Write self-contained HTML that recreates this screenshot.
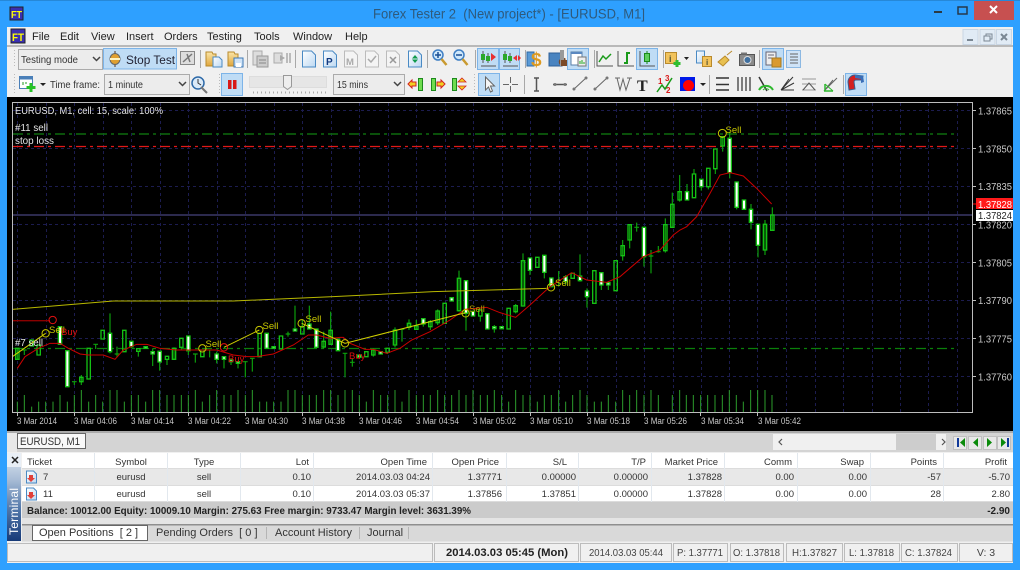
<!DOCTYPE html>
<html><head><meta charset="utf-8"><title>Forex Tester 2</title>
<style>
html,body{margin:0;padding:0;background:#2ea0ff;width:1020px;height:570px;overflow:hidden}
svg{display:block}
text{font-family:"Liberation Sans",sans-serif;white-space:pre}
.m{font-size:11px;fill:#222}
.p{font-size:10px;fill:#c8c8c8}
.t{font-size:9.500px;fill:#c8c8c8}
.w{font-size:10px;fill:#e4e4e4}
.h{font-size:9.500px;fill:#333}
.r{font-size:9.500px;fill:#333}
.e{text-anchor:end}
.c{text-anchor:middle}
.s{font-size:10.500px;fill:#333}
.b{fill:#bfdcf5;stroke:#7db4e8}
.sep{stroke:#a8a8a8;stroke-width:1}
.g{fill:none;stroke:#666}
</style></head><body>
<svg width="1020" height="570" viewBox="0 0 1020 570" xmlns="http://www.w3.org/2000/svg">
<defs>
<linearGradient id="term" x1="0" y1="0" x2="0" y2="1"><stop offset="0" stop-color="#dfe8f2"/><stop offset=".3" stop-color="#a9bdd6"/><stop offset=".65" stop-color="#4f75a8"/><stop offset="1" stop-color="#173a78"/></linearGradient>
<linearGradient id="docb" x1="0" y1="0" x2="1" y2="1"><stop offset="0" stop-color="#fff"/><stop offset="1" stop-color="#bcd8f2"/></linearGradient>
<linearGradient id="fold" x1="0" y1="0" x2="0" y2="1"><stop offset="0" stop-color="#fbe6a8"/><stop offset="1" stop-color="#e0a63c"/></linearGradient>
</defs>
<!-- frame -->
<rect width="1020" height="570" fill="#2ea0ff"/>
<rect x="0" y="0" width="1020" height="1" fill="#2688d8"/>
<rect x="10" y="7" width="13" height="13" fill="#3a2fb0" stroke="#222"/>
<text x="11" y="18" textLength="11" lengthAdjust="spacingAndGlyphs" style="font-size:10px;font-weight:bold;fill:#ff0">FT</text>
<text x="373" y="18.500" textLength="272" lengthAdjust="spacingAndGlyphs" style="font-size:14px;fill:#2f5a7c">Forex Tester 2  (New project*) - [EURUSD, M1]</text>
<rect x="934" y="11" width="8" height="2" fill="#2b3a44"/>
<rect x="958" y="7" width="9" height="7" fill="none" stroke="#26394a" stroke-width="1.500"/>
<rect x="974" y="1" width="40" height="19" fill="#c75050"/>
<path d="M990 6l7 7M997 6l-7 7" stroke="#fff" stroke-width="2"/>
<!-- client -->
<rect x="7" y="27" width="1006" height="70" fill="#f0f0f0"/>
<rect x="7" y="45" width="1006" height="2" fill="#b9b9b9"/>
<rect x="11" y="29" width="14" height="14" fill="#3a2fb0" stroke="#222"/>
<text x="12" y="41" textLength="12" lengthAdjust="spacingAndGlyphs" style="font-size:11px;font-weight:bold;fill:#ff0">FT</text>
<text x="32" y="40" class="m">File</text><text x="60" y="40" class="m">Edit</text><text x="91" y="40" class="m">View</text><text x="126" y="40" class="m">Insert</text><text x="164" y="40" class="m">Orders</text><text x="207" y="40" class="m">Testing</text><text x="254" y="40" class="m">Tools</text><text x="293" y="40" class="m">Window</text><text x="345" y="40" class="m">Help</text>
<g fill="#e1ebf5" stroke="#c9d6e4"><rect x="963" y="29.500" width="15" height="15"/><rect x="980" y="29.500" width="15" height="15"/><rect x="996.500" y="29.500" width="15" height="15"/></g>
<path d="M967 40h6" stroke="#7b8793" stroke-width="2"/>
<path d="M984 36h6v5h-6zM986 36v-2h6v5h-2" fill="none" stroke="#7b8793"/>
<path d="M1001 34l6 6M1007 34l-6 6" stroke="#7b8793" stroke-width="2"/>
<!-- toolbar 1 -->
<path d="M14.500 50v18M14.500 74v20M219.500 74v20M474.500 74v20" stroke="#bbb" stroke-dasharray="1 2"/>
<rect x="18.500" y="49.500" width="84" height="20" fill="#ececec" stroke="#ababab"/>
<text x="21" y="63" class="s" textLength="57" lengthAdjust="spacingAndGlyphs">Testing mode</text>
<path d="M93 57l3.500 3.500L100 57" fill="none" stroke="#444" stroke-width="1.500"/>
<rect x="103.500" y="48.500" width="73" height="20.500" class="b"/>
<path d="M115 51v3M115 64v3" stroke="#888" stroke-width="2"/>
<ellipse cx="115" cy="59" rx="5" ry="5.500" fill="#e0a030" stroke="#666"/><rect x="110" y="58" width="10" height="2" fill="#fff3c0"/>
<text x="126" y="64" style="font-size:12px;fill:#223" textLength="49" lengthAdjust="spacingAndGlyphs">Stop Test</text>
<rect x="180.500" y="51.500" width="14" height="13" fill="#ddd" stroke="#888"/><path d="M183 62l9-8M187 54l3 8" stroke="#777" stroke-width="1.500"/>
<path class="sep" d="M200.500 50v18M247.500 50v18M295.500 50v18M427.500 50v18M475.500 50v18M525.500 50v18M594.500 50v18M663.500 50v18M759.500 50v18"/>
<!-- folders -->
<path d="M206 52h6l1 2h3v12h-10z" fill="url(#fold)" stroke="#b98a2c"/><path d="M213 57h6l3 3v7h-9z" fill="url(#docb)" stroke="#4a8ac4"/>
<path d="M228 52h6l1 2h3v12h-10z" fill="url(#fold)" stroke="#b98a2c"/><rect x="234" y="58" width="9" height="9" fill="#cfe3f7" stroke="#3e78b4"/><rect x="236" y="63" width="5" height="4" fill="#fff"/>
<!-- grey -->
<path d="M253 51h9v14h-9z" fill="#ddd" stroke="#aaa"/><rect x="257" y="56" width="11" height="11" fill="#ccc" stroke="#999"/><path d="M259 60h7M259 63h7" stroke="#888"/>
<rect x="274" y="53" width="8" height="10" fill="#ddd" stroke="#aaa"/><path d="M280 55l5 3-5 3z" fill="#aaa"/><path d="M287 53v10M290 53v10" stroke="#bbb" stroke-width="2"/>
<!-- docs -->
<path d="M302.500 51h9l4 4v12h-13z" fill="url(#docb)" stroke="#4a8ac4"/>
<path d="M323.500 51h9l4 4v12h-13z" fill="url(#docb)" stroke="#4a8ac4"/><text x="326" y="65" style="font-size:10px;font-weight:bold;fill:#123a80">P</text>
<path d="M344.500 51h9l4 4v12h-13z" fill="#f4f4f4" stroke="#bbb"/><text x="346" y="65" style="font-size:9.500px;font-weight:bold;fill:#aaa">M</text>
<path d="M365.500 51h9l4 4v12h-13z" fill="#f4f4f4" stroke="#bbb"/><path d="M368 59l3 3 5-6" fill="none" stroke="#aaa" stroke-width="1.500"/>
<path d="M386.500 51h9l4 4v12h-13z" fill="#f4f4f4" stroke="#bbb"/><path d="M390 57l6 6M396 57l-6 6" stroke="#999" stroke-width="1.500"/>
<path d="M408.500 51h9l4 4v12h-13z" fill="url(#docb)" stroke="#4a8ac4"/><path d="M415 55l3 3.500h-6zM415 63l3-3.500h-6z" fill="#109a4c"/>
<!-- zoom -->
<circle cx="438" cy="55" r="5" fill="#cfe8fb" stroke="#3f7fc4" stroke-width="1.500"/><path d="M441.500 59l5 6" stroke="#c99a30" stroke-width="2.500"/><path d="M435 55h6M438 52v6" stroke="#1a4f95" stroke-width="1.500"/>
<circle cx="459" cy="55" r="5" fill="#cfe8fb" stroke="#3f7fc4" stroke-width="1.500"/><path d="M462.500 59l5 6" stroke="#c99a30" stroke-width="2.500"/><path d="M456 55h6" stroke="#1a4f95" stroke-width="1.500"/>
<!-- active -->
<rect x="477.500" y="48.500" width="21" height="21" class="b"/><rect x="499.500" y="48.500" width="20" height="21" class="b"/>
<path d="M483 51v12M488 53v10M481 66h15M505 51v12M510 53v10M503 66h15" stroke="#555"/>
<rect x="481" y="54" width="4" height="6" fill="#2aa82a"/><rect x="486" y="56" width="4" height="5" fill="#2aa82a"/><path d="M491 53l5 4-5 4z" fill="#e83030"/>
<rect x="503" y="54" width="4" height="6" fill="#2aa82a"/><rect x="508" y="56" width="4" height="5" fill="#2aa82a"/><path d="M513 58l4-3v6zM518 55v6l3-3z" fill="#e83030"/>
<!-- dollar -->
<rect x="527" y="52" width="7" height="14" fill="#5a9ad6" stroke="#2f6aa6"/><text x="531" y="66" style="font-size:19px;font-weight:bold;fill:#dd9a20">$</text>
<rect x="549" y="53" width="13" height="13" fill="#4a84c0" stroke="#2f5f98"/><path d="M560 65a4 4 0 0 1 6-6" fill="#7a4a28"/><rect x="560" y="50" width="4" height="16" fill="#999"/><rect x="561" y="60" width="6" height="6" fill="#7a4a28"/>
<rect x="567.500" y="48.500" width="21" height="21" class="b"/><rect x="571" y="52" width="11" height="13" fill="#fff" stroke="#5a7fa8"/><rect x="578" y="57" width="8" height="9" fill="#eee" stroke="#777"/><path d="M580 64v-3M582 64v-4M584 64v-2" stroke="#2a2"/><rect x="571" y="52" width="11" height="2" fill="#5a88c0"/>
<!-- chart icons -->
<path d="M597 51v15h16" fill="none" stroke="#555"/><path d="M599 62l4-6 3 3 5-5" fill="none" stroke="#1a9a1a" stroke-width="1.500"/>
<path d="M618 51v15h16" fill="none" stroke="#555"/><path d="M624 63h3V53h3" fill="none" stroke="#1a9a1a" stroke-width="2"/>
<rect x="636.500" y="48.500" width="21" height="21" class="b"/><path d="M640 51v15h15" fill="none" stroke="#555"/><path d="M647 51v13" stroke="#1a8a1a"/><rect x="644.500" y="53.500" width="5" height="8" fill="#5ed05e" stroke="#1a8a1a"/>
<!-- info -->
<rect x="665.500" y="52.500" width="11" height="11" fill="#f2c35c" stroke="#b98a2c"/><text x="669" y="62" style="font-size:9px;font-weight:bold;fill:#553">i</text><path d="M677 60v7M673.500 63.500h7" stroke="#2fbd2f" stroke-width="3"/>
<path d="M684 57h5l-2.500 3z" fill="#222"/>
<path d="M696.500 51h8v12h-8z" fill="url(#docb)" stroke="#4a8ac4"/><rect x="702.500" y="56.500" width="9" height="10" fill="#f2c35c" stroke="#b98a2c"/><text x="706" y="65" style="font-size:8px;font-weight:bold;fill:#553">i</text>
<path d="M718 62l7-6 4 4-6 6zM727 55l5-4" fill="#e8c050" stroke="#b98a2c"/>
<rect x="739.500" y="54.500" width="15" height="11" fill="#8a8a8a" stroke="#555"/><circle cx="747.500" cy="60" r="3.500" fill="#3f6f9f" stroke="#ddd"/><rect x="741" y="52.500" width="6" height="2" fill="#777"/>
<rect x="762.500" y="48.500" width="21" height="21" class="b"/><rect x="766" y="52" width="10" height="13" fill="#eee" stroke="#667"/><path d="M768 55h6M768 58h6" stroke="#667"/><rect x="772" y="58" width="9" height="9" fill="#d99a30" stroke="#a67a20"/>
<rect x="786.500" y="50.500" width="14" height="17" fill="#cfe3f7" stroke="#8cb8e2"/><path d="M790 54h8M790 57h8M790 60h8M790 63h8" stroke="#666"/>
<!-- toolbar 2 -->
<rect x="19.500" y="76.500" width="13" height="12" fill="#fff" stroke="#4a7fb8"/><rect x="19.500" y="76.500" width="13" height="3" fill="#4a7fb8"/><path d="M23 85v-3M26 84v-2" stroke="#292"/><path d="M31 83v9M26.500 87.500h9" stroke="#27c227" stroke-width="3"/>
<path d="M40 83h6l-3 3z" fill="#222"/>
<text x="50" y="88" class="s" textLength="50" lengthAdjust="spacingAndGlyphs">Time frame:</text>
<rect x="104.500" y="74.500" width="85" height="20" fill="#ececec" stroke="#ababab"/>
<text x="108" y="88" class="s" textLength="35" lengthAdjust="spacingAndGlyphs">1 minute</text>
<path d="M179 82l3.500 3.500L186 82" fill="none" stroke="#444" stroke-width="1.500"/>
<circle cx="198" cy="83" r="6" fill="#dbeaf8" stroke="#2e6aa8" stroke-width="1.500"/><path d="M198 79v4l3 2" fill="none" stroke="#333"/><path d="M201 87l6 6" stroke="#777" stroke-width="2"/>
<rect x="221.500" y="73.500" width="21" height="22" class="b"/><rect x="228" y="80" width="3.500" height="9" fill="#d81818"/><rect x="233" y="80" width="3.500" height="9" fill="#d81818"/>
<rect x="249.500" y="76.500" width="77" height="11" fill="#e6e6e6" stroke="#ddd"/>
<path d="M283.500 75.500h8v11l-4 3-4-3z" fill="#eee" stroke="#999"/>
<path d="M253 92.500h74" stroke="#aaa" stroke-dasharray="1 3" stroke-width="2"/>
<rect x="333.500" y="74.500" width="71" height="20" fill="#ececec" stroke="#ababab"/>
<text x="337" y="88" class="s" textLength="31" lengthAdjust="spacingAndGlyphs">15 mins</text>
<path d="M394 82l3.500 3.500L401 82" fill="none" stroke="#444" stroke-width="1.500"/>
<rect x="418.500" y="78.500" width="4" height="12" fill="#6fdc4f" stroke="#1d8a1d"/><path d="M408 84l4-4v2h4v4h-4v2z" fill="#f2d020" stroke="#d42020"/>
<rect x="431.500" y="78.500" width="4" height="12" fill="#6fdc4f" stroke="#1d8a1d"/><path d="M445 84l-4-4v2h-4v4h4v2z" fill="#f2d020" stroke="#d42020"/>
<rect x="452.500" y="78.500" width="4" height="12" fill="#6fdc4f" stroke="#1d8a1d"/><path d="M462 78l4 4h-8zM462 90l4-4h-8z" fill="#f2d020" stroke="#d42020" stroke-width=".8"/>
<rect x="478.500" y="73.500" width="21" height="22" class="b"/><path d="M485.500 77v13l3-3 2 5 2-1-2-5h4z" fill="#f4f4f4" stroke="#666"/>
<path d="M510.500 77v6M510.500 86v6M503 84.500h6M512 84.500h6" stroke="#666"/>
<path class="sep" d="M524.500 75v19M709.500 75v19M843.500 75v19"/>
<path d="M536.500 78v13M534 78h5M534 91h5" stroke="#555" stroke-width="1.500" fill="none"/>
<path d="M553 84.500h14" stroke="#555" stroke-width="1.500"/><path d="M573 90l14-13M594 90l14-13" stroke="#666"/>
<g fill="#777"><circle cx="574" cy="89" r="1.500"/><circle cx="586" cy="78" r="1.500"/><circle cx="595" cy="89" r="1.500"/><circle cx="607" cy="78" r="1.500"/><circle cx="555" cy="84.500" r="1.500"/><circle cx="565" cy="84.500" r="1.500"/></g>
<path d="M617 78l3 12 3-11 3 11 4-12M615 78h5M627 78h5" fill="none" stroke="#666"/>
<text x="637" y="91" style="font:bold 16px 'Liberation Serif',serif;fill:#222">T</text>
<text x="658" y="84" style="font-size:8px;font-weight:bold;fill:#d81818">1</text><text x="665" y="81" style="font-size:8px;font-weight:bold;fill:#d81818">3</text><text x="666" y="93" style="font-size:8px;font-weight:bold;fill:#d81818">2</text>
<path d="M657 92l5-7 3 4 7-11" fill="none" stroke="#1a9a1a" stroke-width="1.500"/>
<rect x="680" y="77" width="15" height="14" fill="#0018e8"/><circle cx="688.500" cy="85.500" r="5.500" fill="#f00"/>
<path d="M700 83h6l-3 3z" fill="#222"/>
<path d="M716 78h13M716 84.500h13M716 90h13" stroke="#333" stroke-width="1.500"/>
<path d="M738 77v14M742 77v14M746 77v14M750 77v14" stroke="#555" stroke-width="1.500"/>
<path d="M759 77l8 14" stroke="#333" stroke-width="1.500"/><path d="M759 90a8 8 0 0 1 14 0" fill="none" stroke="#2eb82e" stroke-width="2"/><path d="M763 90a4 4 0 0 1 6 0" fill="none" stroke="#2eb82e"/>
<path d="M781 90l12-13M781 90l13-7M781 90h13M781 90l8-11" stroke="#333"/>
<path d="M802 79h14M802 84l14 0M802 90h14" stroke="#999"/><path d="M803 90l6-7 6 7" fill="none" stroke="#555"/>
<path d="M824 91l13-13M824 91l9-11" stroke="#666"/><path d="M824 91h9M825 84v7" stroke="#2eb82e" stroke-width="1.500"/><path d="M825 84l8 7" stroke="#2eb82e"/>
<rect x="845.500" y="73.500" width="21" height="22" class="b"/>
<path d="M849 90l-1-8a7 7 0 0 1 7-7l8 1-1 4-6 0a2 2 0 0 0-2 2l1 7z" fill="#d42020" stroke="#3a5f90"/>
<path d="M855 75l8 1 1 6-3 1 0-4-6-1z" fill="#3a6fb8"/>
<!-- black chart area -->
<rect x="7" y="97" width="1006" height="334" fill="#000"/>
<!-- grid -->
<path d="M13 110.500H972M13 148.500H972M13 186.500H972M13 224.500H972M13 262.500H972M13 300.500H972M13 338.500H972M13 376.500H972" stroke="#1c1c50" stroke-dasharray="3 3"/>
<path d="M17.500 103V412M46.500 103V412M74.500 103V412M103.500 103V412M131.500 103V412M160.500 103V412M188.500 103V412M217.500 103V412M245.500 103V412M274.500 103V412M302.500 103V412M331.500 103V412M359.500 103V412M388.500 103V412M416.500 103V412M445.500 103V412M473.500 103V412M502.500 103V412M530.500 103V412M559.500 103V412M587.500 103V412M616.500 103V412M644.500 103V412M673.500 103V412M701.500 103V412M729.500 103V412M757.500 103V412M786.500 103V412M815.500 103V412M843.500 103V412M872.500 103V412M900.500 103V412M928.500 103V412M957.500 103V412" stroke="#1c1c50" stroke-dasharray="3 3"/>
<!-- levels -->
<path d="M13 215H973" stroke="#3a3868" stroke-width="1.500"/>
<path d="M13 134H958" stroke="#0d6a0d" stroke-width="1.500" stroke-dasharray="10 4 3 4"/>
<path d="M13 146.500H958" stroke="#e01818" stroke-width="1.200" stroke-dasharray="10 4 3 4"/>
<path d="M13 348.500H958" stroke="#0a800a" stroke-width="1.200" stroke-dasharray="10 4 3 4"/>
<!-- volumes -->
<g transform="translate(0,100) scale(.33333)" fill="none" stroke="#2c9c2c" stroke-width="3">
<path d="M52 905V938M73 885V938M95 920V938M116 905V938M137 905V938M159 905V938M180 885V938M202 905V938M223 885V938M244 870V938M266 905V938M287 885V938M308 905V938M330 870V938M351 870V938M373 905V938M394 885V938M415 885V938M437 905V938M458 870V938M479 870V938M501 885V938M522 885V938M544 885V938M565 885V938M586 870V938M607 905V938M629 885V938M650 870V938M672 885V938M693 885V938M714 870V938M736 885V938M757 870V938M779 905V938M800 905V938M821 905V938M843 905V938M864 870V938M885 870V938M907 885V938M928 885V938M949 885V938M971 870V938M992 870V938M1014 885V938"/>
<path d="M1035 870V938M1057 870V938M1078 885V938M1099 905V938M1120 870V938M1142 885V938M1163 885V938M1185 870V938M1206 905V938M1227 870V938M1249 885V938M1270 885V938M1291 885V938M1313 870V938M1334 885V938M1355 885V938M1377 870V938M1398 885V938M1419 870V938M1441 885V938M1462 885V938M1483 870V938M1505 885V938M1526 905V938M1547 870V938M1569 885V938M1590 885V938M1612 905V938M1633 885V938M1654 885V938M1676 870V938M1697 905V938M1718 885V938M1740 870V938M1761 885V938M1783 905V938M1804 905V938M1825 885V938M1847 905V938M1868 870V938M1889 885V938M1910 870V938M1932 885V938M1953 870V938M1975 885V938M2017 885V938M2039 870V938"/>
<path d="M2059 885V938M2080 885V938M2102 885V938M2123 885V938M2145 885V938M2167 885V938M2188 870V938M2209 885V938M2230 905V938M2252 870V938M2273 870V938M2295 870V938M2316 885V938"/>
</g>
<!-- candles zone 1 -->
<g transform="translate(0,100) scale(.33333)" stroke="#14c014" stroke-width="4" fill="none">
<path stroke="#0ca00c" stroke-width="3.500" d="M52 745V778M73 750V765M66 750H80M223 845V855M216 845H230M244 825V855M287 733V747M280 733H294M330 640V760M351 740V770M344 762H358M394 740V745M415 754V770M458 745V798M479 786V812M501 778V795M522 742V780M544 742V750M565 752V765M586 762V788M579 762H593M629 750V772M650 755V790M672 778V805M693 775V795M714 790V805M736 785V832M729 785H743M757 775V815M750 775H764M864 695V710M857 702H871M885 617V695M907 660V680M928 617V672M949 742V745M971 695V745M992 635V733"/>
<path d="M47 745h10V778h-10zM90 720h10V738h-10zM111 735h10V765h-10zM239 832h10V845h-10zM261 745h10V837h-10zM303 691h10V717h-10zM368 691h10V755h-10zM410 746h10V754h-10zM496 769h10V778h-10zM517 745h10V778h-10zM539 715h10V742h-10zM602 750h10V770h-10zM774 700h10V770h-10zM838 708h10V747h-10zM902 680h10V702h-10zM966 724h10V741h-10zM987 691h10V733h-10z"/>
<path fill="#fff" d="M175 680h10V733h-10zM197 752h10V860h-10zM325 700h10V755h-10zM389 724h10V740h-10zM432 740h10V745h-10zM453 755h10V762h-10zM474 754h10V786h-10zM560 708h10V752h-10zM645 762h10V778h-10zM667 770h10V778h-10zM688 780h10V785h-10zM709 785h10V790h-10zM795 700h10V745h-10zM816 740h10V745h-10zM880 687h10V693h-10zM923 672h10V687h-10zM944 687h10V742h-10zM1009 718h10V752h-10z"/>
</g>
<!-- candles zone 2 -->
<g transform="translate(340,100) scale(.33333)" stroke="#14c014" stroke-width="4" fill="none">
<path stroke="#0ca00c" stroke-width="3.500" d="M15 760V832M8 760H22M37 775V800M30 787H44M100 745V770M143 757V762M165 682V742M186 685V725M179 688H193M207 658V690M229 660V690M250 656V680M271 660V690M293 628V675M357 512V635M378 542V692M421 648V665M463 675V698M527 612V640M549 460V620M570 511V525M613 517V535M656 513V560M677 525V555M720 463V545M741 565V623M784 555V570M805 555V570M848 420V482M869 374V445M890 368V395M883 382H897M912 470V500M933 450V520M926 468H940M955 438V458M948 455H962M976 355V458M997 278V382M1019 225V305"/>
<path d="M74 755h10V770h-10zM95 750h10V765h-10zM138 745h10V757h-10zM160 690h10V735h-10zM202 670h10V682h-10zM224 678h10V688h-10zM266 665h10V680h-10zM288 633h10V668h-10zM309 610h10V670h-10zM352 535h10V632h-10zM416 630h10V648h-10zM501 625h10V687h-10zM522 617h10V635h-10zM544 482h10V618h-10zM587 472h10V502h-10zM693 520h10V535h-10zM758 512h10V610h-10zM822 482h10V572h-10zM843 437h10V467h-10zM864 374h10V420h-10zM971 374h10V452h-10zM992 313h10V382h-10zM1014 275h10V300h-10z"/>
<path fill="#fff" d="M53 765h10V772h-10zM117 755h10V762h-10zM245 656h10V672h-10zM330 593h10V603h-10zM373 542h10V640h-10zM394 634h10V648h-10zM437 641h10V687h-10zM458 680h10V686h-10zM480 680h10V686h-10zM565 474h10V511h-10zM608 466h10V517h-10zM629 534h10V560h-10zM672 530h10V545h-10zM715 528h10V542h-10zM736 573h10V590h-10zM779 518h10V555h-10zM800 548h10V555h-10zM907 382h10V470h-10z"/>
</g>
<!-- candles zone 3 -->
<g transform="translate(680,100) scale(.33333)" stroke="#14c014" stroke-width="4" fill="none">
<path stroke="#0ca00c" stroke-width="3.500" d="M21 252V275M42 207V222M64 260V272M85 260V268M106 206V222M128 108V155M149 95V235M170 322V328M213 312V388M234 436V472M255 360V465M277 322V391"/>
<path d="M37 222h10V293h-10zM80 205h10V260h-10zM101 147h10V206h-10zM123 110h10V138h-10zM250 373h10V450h-10zM272 345h10V391h-10z"/>
<path fill="#fff" d="M16 275h10V300h-10zM59 238h10V260h-10zM144 115h10V218h-10zM165 246h10V322h-10zM187 300h10V328h-10zM208 328h10V367h-10zM229 373h10V436h-10z"/>
</g>
<!-- indicators -->
<g transform="translate(0,100) scale(.33333)" fill="none" stroke-width="3">
<path stroke="#c00" d="M52 805L75 770L115 745L150 730L180 730L205 745L240 762L265 765L310 765L345 778L370 750L410 733L440 733L480 745L530 750L600 750L650 750L700 765L740 770L770 770L820 762L880 735L925 705L950 705L990 715L1020 712L1030 712L1050 730L1095 748L1120 748L1160 760L1200 745L1235 720L1290 695L1350 660L1395 628L1460 622L1500 638L1547 652L1590 615L1650 560L1715 518L1760 540L1820 547L1860 530L1930 470L1980 450L2020 405L2040 390L2060 380L2090 350L2130 280L2160 225L2190 218L2230 228L2270 265L2315 312"/>
<path stroke="#b8b800" d="M37 628L340 603L700 603L1000 590L1300 575L1640 565"/>
<path stroke="#d0d000" d="M37 770L137 700M672 742L778 690M905 670L1035 730L1397 638"/>
<path stroke="#8a0000" stroke-width="4" d="M37 662H150"/>
<g stroke="#c8c800"><circle cx="137" cy="700" r="11"/><circle cx="607" cy="745" r="11"/><circle cx="778" cy="690" r="11"/><circle cx="905" cy="670" r="11"/><circle cx="1035" cy="730" r="11"/><circle cx="1397" cy="640" r="11"/><circle cx="1653" cy="562" r="11"/><circle cx="2167" cy="100" r="12"/></g>
<g stroke="#e01010"><circle cx="158" cy="660" r="11"/><circle cx="672" cy="742" r="11"/></g>
</g>
<!-- chart frame -->
<rect x="12.500" y="102.500" width="960" height="310" fill="none" stroke="#bdbdbd"/>
<path d="M17.500 413v3M74.500 413v3M131.500 413v3M188.500 413v3M245.500 413v3M302.500 413v3M359.500 413v3M416.500 413v3M473.500 413v3M530.500 413v3M587.500 413v3M644.500 413v3M700.500 413v3M757.500 413v3M973 110.500h3M973 148.500h3M973 186.500h3M973 224.500h3M973 262.500h3M973 300.500h3M973 338.500h3M973 376.500h3" stroke="#bdbdbd"/>
<!-- chart text -->
<text x="15" y="114" class="w" textLength="148" lengthAdjust="spacingAndGlyphs">EURUSD, M1, cell: 15, scale: 100%</text>
<text x="15" y="131" class="w" textLength="33" lengthAdjust="spacingAndGlyphs">#11 sell</text><text x="15" y="144" class="w" textLength="39" lengthAdjust="spacingAndGlyphs">stop loss</text><text x="15" y="346" class="w" textLength="28" lengthAdjust="spacingAndGlyphs">#7 sell</text>
<g style="font-size:9.500px;fill:#c8c800"><text x="49" y="333">Sell</text><text x="205.500" y="347">Sell</text><text x="262.500" y="329">Sell</text><text x="305.500" y="322">Sell</text><text x="469" y="312" fill="#b0a000">Sell</text><text x="555" y="286">Sell</text><text x="725.500" y="133">Sell</text></g>
<g style="font-size:9.500px;fill:#e01010"><text x="61" y="335">Buy</text><text x="228" y="362">Buy</text><text x="349" y="359">Buy</text></g>
<text x="17" y="424" class="t" textLength="40" lengthAdjust="spacingAndGlyphs">3 Mar 2014</text><text x="74" y="424" class="t" textLength="43" lengthAdjust="spacingAndGlyphs">3 Mar 04:06</text><text x="131" y="424" class="t" textLength="43" lengthAdjust="spacingAndGlyphs">3 Mar 04:14</text><text x="188" y="424" class="t" textLength="43" lengthAdjust="spacingAndGlyphs">3 Mar 04:22</text><text x="245" y="424" class="t" textLength="43" lengthAdjust="spacingAndGlyphs">3 Mar 04:30</text><text x="302" y="424" class="t" textLength="43" lengthAdjust="spacingAndGlyphs">3 Mar 04:38</text><text x="359" y="424" class="t" textLength="43" lengthAdjust="spacingAndGlyphs">3 Mar 04:46</text><text x="416" y="424" class="t" textLength="43" lengthAdjust="spacingAndGlyphs">3 Mar 04:54</text><text x="473" y="424" class="t" textLength="43" lengthAdjust="spacingAndGlyphs">3 Mar 05:02</text><text x="530" y="424" class="t" textLength="43" lengthAdjust="spacingAndGlyphs">3 Mar 05:10</text><text x="587" y="424" class="t" textLength="43" lengthAdjust="spacingAndGlyphs">3 Mar 05:18</text><text x="644" y="424" class="t" textLength="43" lengthAdjust="spacingAndGlyphs">3 Mar 05:26</text><text x="701" y="424" class="t" textLength="43" lengthAdjust="spacingAndGlyphs">3 Mar 05:34</text><text x="758" y="424" class="t" textLength="43" lengthAdjust="spacingAndGlyphs">3 Mar 05:42</text>
<text x="978" y="114.500" class="p" textLength="34" lengthAdjust="spacingAndGlyphs">1.37865</text><text x="978" y="152.500" class="p" textLength="34" lengthAdjust="spacingAndGlyphs">1.37850</text><text x="978" y="190" class="p" textLength="34" lengthAdjust="spacingAndGlyphs">1.37835</text><text x="978" y="228.500" class="p" textLength="34" lengthAdjust="spacingAndGlyphs">1.37820</text><text x="978" y="266.500" class="p" textLength="34" lengthAdjust="spacingAndGlyphs">1.37805</text><text x="978" y="304" class="p" textLength="34" lengthAdjust="spacingAndGlyphs">1.37790</text><text x="978" y="342.500" class="p" textLength="34" lengthAdjust="spacingAndGlyphs">1.37775</text><text x="978" y="380.500" class="p" textLength="34" lengthAdjust="spacingAndGlyphs">1.37760</text>
<rect x="976" y="198" width="37" height="11" fill="#ff1a1a"/><path d="M973 204h3" stroke="#f00"/>
<text x="978" y="208" style="font-size:10.500px;fill:#fff" textLength="34" lengthAdjust="spacingAndGlyphs">1.37828</text>
<rect x="976" y="210" width="37" height="11" fill="#fff"/>
<text x="978" y="219" style="font-size:10.500px;fill:#222" textLength="34" lengthAdjust="spacingAndGlyphs">1.37824</text>
<!-- tab strip -->
<rect x="7" y="431" width="1006" height="21" fill="#d4d4d4"/>
<rect x="7" y="431" width="1006" height="2" fill="#aaa"/>
<rect x="7" y="433" width="10" height="19" fill="#e8e8e8"/>
<rect x="17.500" y="433.500" width="68" height="15" fill="#f8f8f8" stroke="#666"/>
<text x="20" y="445" class="s" textLength="60" lengthAdjust="spacingAndGlyphs" style="font-size:11px">EURUSD, M1</text>
<rect x="773" y="434" width="173" height="16" fill="#f0f0f0"/><rect x="896" y="434" width="40" height="16" fill="#cdcdcd"/>
<path d="M782 439l-3 3 3 3M942 439l3 3-3 3" fill="none" stroke="#555" stroke-width="1.200"/>
<g fill="#e8e8e8" stroke="#c0c0c0"><rect x="953.500" y="436.500" width="13" height="13"/><rect x="968.500" y="436.500" width="13" height="13"/><rect x="983.500" y="436.500" width="13" height="13"/><rect x="997.500" y="436.500" width="13" height="13"/></g>
<path d="M958 438v9" stroke="#123a9a" stroke-width="2"/><path d="M965 438l-5 4.500 5 4.500z" fill="#0a8a0a"/><path d="M978 438l-5 4.500 5 4.500z" fill="#0a8a0a"/><path d="M987 438l5 4.500-5 4.500z" fill="#0a8a0a"/><path d="M1001 438l5 4.500-5 4.500z" fill="#0a8a0a"/><path d="M1008 438v9" stroke="#123a9a" stroke-width="2"/>
<!-- terminal -->
<rect x="7" y="452" width="1006" height="111" fill="#f0f0f0"/>
<rect x="7" y="453" width="14" height="88" fill="url(#term)"/>
<rect x="7" y="453" width="14" height="14" fill="#e9eff6"/>
<path d="M12 457l6 6M18 457l-6 6" stroke="#222" stroke-width="1.500"/>
<text transform="translate(18,535) rotate(-90)" textLength="47" lengthAdjust="spacing" style="font-size:12px;fill:#fff">Terminal</text>
<rect x="22" y="453" width="991" height="16" fill="#fff"/>
<rect x="22" y="469" width="991" height="16" fill="#e8e8e8"/>
<rect x="22" y="486" width="991" height="16" fill="#fff"/>
<rect x="22" y="502" width="991" height="16" fill="#cbcbcb"/>
<path d="M22 468.500H1013M22 485.500H1013M22 501.500H1013" stroke="#dcdcdc"/>
<path d="M94.500 453v49M167.500 453v49M240.500 453v49M313.500 453v49M432.500 453v49M506.500 453v49M578.500 453v49M651.500 453v49M724.500 453v49M797.500 453v49M870.500 453v49M943.500 453v49" stroke="#e2e8ee"/>
<text x="27" y="465" class="h">Ticket</text><text x="131" y="465" class="h c">Symbol</text><text x="204" y="465" class="h c">Type</text><text x="309" y="465" class="h e">Lot</text><text x="427" y="465" class="h e">Open Time</text><text x="499" y="465" class="h e">Open Price</text><text x="567" y="465" class="h e">S/L</text><text x="646" y="465" class="h e">T/P</text><text x="718" y="465" class="h e">Market Price</text><text x="792" y="465" class="h e">Comm</text><text x="864" y="465" class="h e">Swap</text><text x="937" y="465" class="h e">Points</text><text x="1007" y="465" class="h e">Profit</text>
<path d="M26.500 471h7l3 3v9h-10z" fill="url(#docb)" stroke="#4a8ac4"/><path d="M29 475h4v3h2l-4 4-4-4h2z" fill="#e0403a"/>
<path d="M26.500 488h7l3 3v9h-10z" fill="url(#docb)" stroke="#4a8ac4"/><path d="M29 492h4v3h2l-4 4-4-4h2z" fill="#e0403a"/>
<text x="43" y="480" class="r">7</text><text x="131" y="480" class="r c">eurusd</text><text x="204" y="480" class="r c">sell</text><text x="311" y="480" class="r e">0.10</text><text x="430" y="480" class="r e">2014.03.03 04:24</text><text x="502" y="480" class="r e">1.37771</text><text x="576" y="480" class="r e">0.00000</text><text x="648" y="480" class="r e">0.00000</text><text x="722" y="480" class="r e">1.37828</text><text x="794" y="480" class="r e">0.00</text><text x="867" y="480" class="r e">0.00</text><text x="941" y="480" class="r e">-57</text><text x="1010" y="480" class="r e">-5.70</text>
<text x="43" y="497" class="r">11</text><text x="131" y="497" class="r c">eurusd</text><text x="204" y="497" class="r c">sell</text><text x="311" y="497" class="r e">0.10</text><text x="430" y="497" class="r e">2014.03.03 05:37</text><text x="502" y="497" class="r e">1.37856</text><text x="576" y="497" class="r e">1.37851</text><text x="648" y="497" class="r e">0.00000</text><text x="722" y="497" class="r e">1.37828</text><text x="794" y="497" class="r e">0.00</text><text x="867" y="497" class="r e">0.00</text><text x="941" y="497" class="r e">28</text><text x="1010" y="497" class="r e">2.80</text>
<text x="27" y="514" style="font-size:10px;font-weight:bold;fill:#222" textLength="444" lengthAdjust="spacingAndGlyphs">Balance: 10012.00 Equity: 10009.10 Margin: 275.63 Free margin: 9733.47 Margin level: 3631.39%</text>
<text x="1010" y="514" class="e" style="font-size:10px;font-weight:bold;fill:#222">-2.90</text>
<!-- bottom tabs -->
<rect x="22" y="518" width="991" height="6" fill="#e4e4e4"/>
<rect x="22" y="524" width="991" height="1.500" fill="#8f8f8f"/>
<rect x="22" y="525.500" width="991" height="16" fill="#d9d9d9"/>
<rect x="32.500" y="525.500" width="115" height="15" fill="#fff" stroke="#666"/>
<g style="font-size:11px;fill:#333"><text x="39" y="536">Open Positions  [ 2 ]</text><text x="156" y="536">Pending Orders  [ 0 ]</text><text x="275" y="536">Account History</text><text x="367" y="536">Journal</text></g>
<path d="M266.500 527v12M359.500 527v12M408.500 527v12" stroke="#b5b5b5"/>
<!-- status bar -->
<rect x="7" y="542" width="1006" height="21" fill="#f0f0f0"/>
<g fill="#f0f0f0" stroke="#bcbcbc"><rect x="7.500" y="543.500" width="425" height="18"/><rect x="434.500" y="543.500" width="144" height="18"/><rect x="580.500" y="543.500" width="91" height="18"/><rect x="673.500" y="543.500" width="54" height="18"/><rect x="730.500" y="543.500" width="53" height="18"/><rect x="786.500" y="543.500" width="56" height="18"/><rect x="844.500" y="543.500" width="55" height="18"/><rect x="901.500" y="543.500" width="56" height="18"/><rect x="959.500" y="543.500" width="53" height="18"/></g>
<text x="446" y="556" style="font-size:11px;font-weight:bold;fill:#222" textLength="122" lengthAdjust="spacingAndGlyphs">2014.03.03 05:45 (Mon)</text>
<g style="font-size:10.500px;fill:#444"><text x="589" y="556" textLength="74" lengthAdjust="spacingAndGlyphs">2014.03.03 05:44</text><text x="677" y="556" textLength="46" lengthAdjust="spacingAndGlyphs">P: 1.37771</text><text x="733" y="556" textLength="47" lengthAdjust="spacingAndGlyphs">O: 1.37818</text><text x="792" y="556" textLength="45" lengthAdjust="spacingAndGlyphs">H:1.37827</text><text x="849" y="556" textLength="45" lengthAdjust="spacingAndGlyphs">L: 1.37818</text><text x="905" y="556" textLength="47" lengthAdjust="spacingAndGlyphs">C: 1.37824</text><text x="986" y="556" text-anchor="middle">V: 3</text></g>
</svg>
</body></html>
